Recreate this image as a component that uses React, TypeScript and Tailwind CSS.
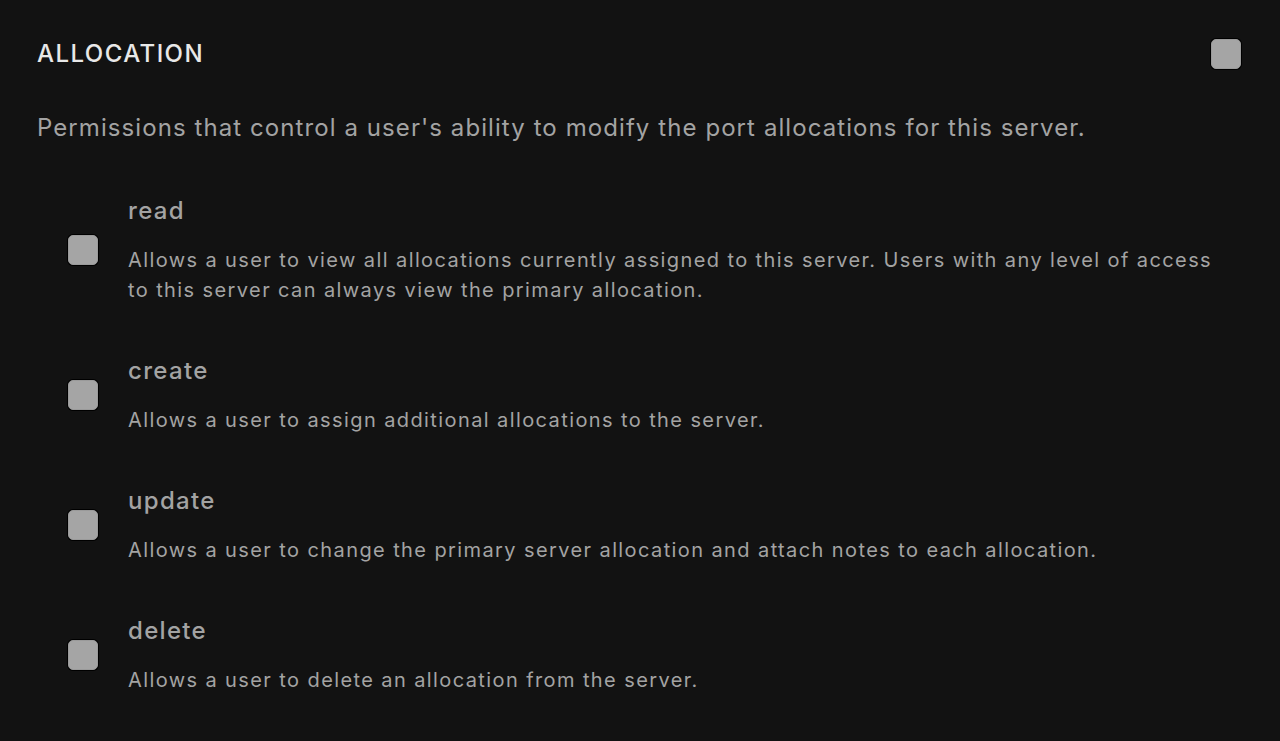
import React from "react";

const rows = [
  {
    name: "read",
    desc: "Allows a user to view all allocations currently assigned to this server. Users with any level of access to this server can always view the primary allocation.",
  },
  { name: "create", desc: "Allows a user to assign additional allocations to the server." },
  { name: "update", desc: "Allows a user to change the primary server allocation and attach notes to each allocation." },
  { name: "delete", desc: "Allows a user to delete an allocation from the server." },
];

function Box() {
  return (
    <div className="w-[30px] h-[30px] shrink-0 rounded-[5px] bg-[#a5a5a5] border border-[#9a9a9a] shadow-[0_0_0_1px_#000]" />
  );
}

export default function App() {
  return (
    <div
      className="min-h-[741px] w-full bg-[#121212] pl-[37px] pr-[39px] pt-[38px]"
      style={{ fontFamily: "Inter, 'Liberation Sans', sans-serif" }}
    >
      <div className="flex items-center justify-between">
        <h2 className="text-[24px] leading-[32px] font-medium tracking-[0.06em] text-[#e8e8e8]">ALLOCATION</h2>
        <Box />
      </div>
      <p className="mt-[42px] text-[24px] leading-[32px] tracking-[0.045em] text-[#a3a3a3]">
        Permissions that control a user's ability to modify the port allocations for this server.
      </p>
      <div className="mt-[51px] flex flex-col gap-[50px]">
        {rows.map((r) => (
          <div key={r.name} className="flex items-center pr-[20px]">
            <div className="w-[91px] pl-[31px] shrink-0">
              <Box />
            </div>
            <div className="flex flex-col">
              <div className="text-[24px] leading-[32px] font-medium tracking-[0.055em] text-[#a3a3a3]">{r.name}</div>
              <div className="mt-[18px] text-[20px] leading-[30px] tracking-[0.07em] text-[#a3a3a3]">{r.desc}</div>
            </div>
          </div>
        ))}
      </div>
    </div>
  );
}
